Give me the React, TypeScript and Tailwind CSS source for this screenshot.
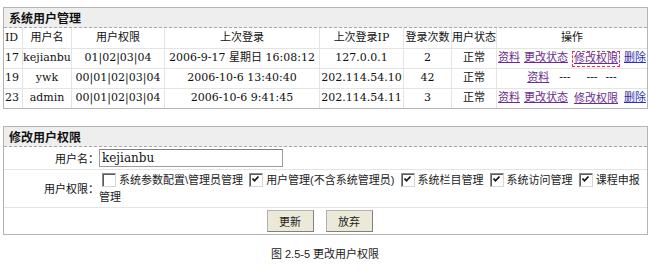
import { type ReactNode } from 'react';

type User = {
  id: string;
  name: string;
  perm: string;
  last: string;
  ip: string;
  count: string;
  status: string;
  full: boolean;
  focused?: boolean;
};

const USERS: User[] = [
  {
    id: '17',
    name: 'kejianbu',
    perm: '01|02|03|04',
    last: '2006-9-17 星期日 16:08:12',
    ip: '127.0.0.1',
    count: '2',
    status: '正常',
    full: true,
    focused: true,
  },
  {
    id: '19',
    name: 'ywk',
    perm: '00|01|02|03|04',
    last: '2006-10-6 13:40:40',
    ip: '202.114.54.10',
    count: '42',
    status: '正常',
    full: false,
  },
  {
    id: '23',
    name: 'admin',
    perm: '00|01|02|03|04',
    last: '2006-10-6 9:41:45',
    ip: '202.114.54.11',
    count: '3',
    status: '正常',
    full: true,
  },
];

const HEADERS = ['用户名', '用户权限', '上次登录', '上次登录IP', '登录次数', '用户状态', '操作'];

const Cell = ({ children, first }: { children?: ReactNode; first?: boolean }) =>
  first ? (
    <div className="flex items-center whitespace-nowrap pl-[1px]">{children}</div>
  ) : (
    <div className="flex items-center justify-center whitespace-nowrap border-l border-[#e4e4e4]">
      {children}
    </div>
  );

const Link = ({ children, blue }: { children: ReactNode; blue?: boolean }) => (
  <a className={blue ? 'text-[#2f2fae] underline' : 'text-[#6a2d8c] underline'}>{children}</a>
);

const Box = ({ checked }: { checked?: boolean }) => (
  <span className="mx-[3px] inline-block h-[14px] w-[14px] border border-[#8c8c8c] border-r-[#d6d6d6] border-b-[#d6d6d6] bg-white align-[-3px] shadow-[inset_1px_1px_0_#5a5a5a]">
    {checked && (
      <svg width="12" height="12" viewBox="0 0 12 12" className="block">
        <polyline points="2.5,4.5 4.5,6.8 8.5,2.5" fill="none" stroke="#111" strokeWidth="1.7" />
      </svg>
    )}
  </span>
);

// the last label wraps after 课程申报, so it is kept in two pieces
const PERMS = [
  { label: ['系统参数配置\\管理员管理'], checked: false },
  { label: ['用户管理(不含系统管理员)'], checked: true },
  { label: ['系统栏目管理'], checked: true },
  { label: ['系统访问管理'], checked: true },
  { label: ['课程申报', '管理'], checked: true },
];

export default function App() {
  return (
    <div className="h-[271px] w-[650px] bg-white font-['DejaVu_Serif','Noto_Sans_CJK_SC',serif] text-[11px] text-[#111]">
      {/* 系统用户管理 */}
      <div className="ml-[3px] mt-[7px] w-[645px] border border-[#b4b4b4]">
        <div className="flex h-[20px] items-center border-b border-dashed border-[#a8a8a8] bg-[#eeeeee] pl-[5px] font-['Noto_Sans_CJK_SC',sans-serif] text-[12px] font-bold">
          系统用户管理
        </div>
        <div className="grid h-[20px] grid-cols-[18px_49px_93px_155px_84px_48px_45px_151px]">
          <Cell first>ID</Cell>
          {HEADERS.map((h) => (
            <Cell key={h}>{h}</Cell>
          ))}
        </div>
        {USERS.map((u) => (
          <div
            key={u.id}
            className="grid h-[20px] grid-cols-[18px_49px_93px_155px_84px_48px_45px_151px] border-t border-[#e4e4e4]"
          >
            <Cell first>{u.id}</Cell>
            <Cell>{u.name}</Cell>
            <Cell>{u.perm}</Cell>
            <Cell>{u.last}</Cell>
            <Cell>{u.ip}</Cell>
            <Cell>{u.count}</Cell>
            <Cell>{u.status}</Cell>
            <Cell>
              {u.full ? (
                <span className="flex items-center gap-[4px]">
                  <Link>资料</Link>
                  <Link>更改状态</Link>
                  <span
                    className={
                      u.focused
                        ? 'border border-dashed border-[#e0344c] px-[1px] leading-[14px]'
                        : 'border border-transparent px-[1px] leading-[14px]'
                    }
                  >
                    <Link>修改权限</Link>
                  </span>
                  <Link blue>删除</Link>
                </span>
              ) : (
                <span className="flex items-center">
                  <Link>资料</Link>
                  <span className="ml-[10px]">---</span>
                  <span className="ml-[16px]">---</span>
                  <span className="ml-[8px]">---</span>
                </span>
              )}
            </Cell>
          </div>
        ))}
      </div>

      {/* 修改用户权限 */}
      <div className="ml-[3px] mt-[17px] w-[645px] border border-[#b4b4b4]">
        <div className="flex h-[20px] items-center border-b border-dashed border-[#a8a8a8] bg-[#eeeeee] pl-[5px] font-['Noto_Sans_CJK_SC',sans-serif] text-[12px] font-bold">
          修改用户权限
        </div>
        <div className="flex h-[22px]">
          <div className="flex w-[95px] items-center justify-end font-['Noto_Sans_CJK_SC',sans-serif]">
            用户名：
          </div>
          <div className="flex items-center">
            <input
              readOnly
              value="kejianbu"
              className="h-[18px] w-[184px] border border-[#9c9c9c] border-t-[#7c7c7c] bg-white px-[2px] font-['DejaVu_Serif',serif] text-[12px] outline-none"
            />
          </div>
        </div>
        <div className="flex h-[38px] border-t border-[#e4e4e4]">
          <div className="flex w-[95px] shrink-0 items-center justify-end font-['Noto_Sans_CJK_SC',sans-serif]">
            用户权限：
          </div>
          <div className="flex flex-1 items-center pr-[4px]">
            <div className="font-['Liberation_Sans','Noto_Sans_CJK_SC',sans-serif] leading-[17px] text-[#222]">
              {PERMS.map((p) => (
                <span key={p.label.join('')}>
                  <Box checked={p.checked} />
                  {p.label.map((part) => (
                    <span key={part}>{part}</span>
                  ))}{' '}
                </span>
              ))}
            </div>
          </div>
        </div>
        <div className="flex h-[27px] items-center justify-center gap-[12px] border-t border-[#e4e4e4] pr-[12px]">
          <button className="h-[22px] w-[47px] border border-[#b0b0b0] border-r-[#808080] border-b-[#808080] bg-[#ece9d8] font-['Noto_Sans_CJK_SC',sans-serif] text-[11px] text-[#222]">
            更新
          </button>
          <button className="h-[22px] w-[47px] border border-[#b0b0b0] border-r-[#808080] border-b-[#808080] bg-[#ece9d8] font-['Noto_Sans_CJK_SC',sans-serif] text-[11px] text-[#222]">
            放弃
          </button>
        </div>
      </div>

      <p className="mt-[12px] text-center font-['Liberation_Sans','Noto_Sans_CJK_SC',sans-serif] leading-[14px] text-[#222]">
        图 2.5-5 更改用户权限
      </p>
    </div>
  );
}
